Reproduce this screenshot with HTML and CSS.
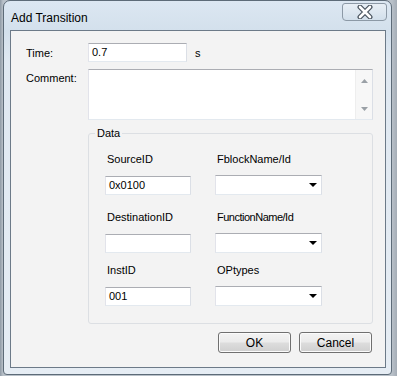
FILE: index.html
```html
<!DOCTYPE html>
<html>
<head>
<meta charset="utf-8">
<link rel="stylesheet" href="styles.css">
</head>
<body>
<div class="window">
  <div class="titlebar">
    <span class="title">Add Transition</span>
    <div class="close">
      <svg width="20" height="14" viewBox="0 0 20 14">
        <path d="M5 2 L15 12 M15 2 L5 12" stroke="#4b5560" stroke-width="5" stroke-linecap="round"/>
        <path d="M5 2 L15 12 M15 2 L5 12" stroke="#ffffff" stroke-width="2.6" stroke-linecap="round"/>
      </svg>
    </div>
  </div>
  <div class="client">
    <div class="row time-row">
      <label class="lbl">Time:</label>
      <div class="textbox time-box">0.7</div>
      <span class="unit">s</span>
    </div>
    <div class="row comment-row">
      <label class="lbl comment-lbl">Comment:</label>
      <div class="textarea">
        <div class="scroll">
          <svg width="7" height="4" viewBox="0 0 7 4"><path d="M0 4 L3.5 0 L7 4 Z" fill="#9aa0a6"/></svg>
          <svg width="7" height="4" viewBox="0 0 7 4"><path d="M0 0 L3.5 4 L7 0 Z" fill="#9aa0a6"/></svg>
        </div>
      </div>
    </div>
    <fieldset class="group">
      <legend>Data</legend>
      <div class="grid">
        <div class="cell r1"><span class="flbl">SourceID</span><div class="textbox small">0x0100</div></div>
        <div class="cell r1"><span class="flbl">FblockName/Id</span><div class="combo"><span class="arrow"></span></div></div>
        <div class="cell r2"><span class="flbl">DestinationID</span><div class="textbox small"></div></div>
        <div class="cell r2"><span class="flbl narrow">FunctionName/Id</span><div class="combo"><span class="arrow"></span></div></div>
        <div class="cell r3"><span class="flbl">InstID</span><div class="textbox small">001</div></div>
        <div class="cell r3"><span class="flbl">OPtypes</span><div class="combo"><span class="arrow"></span></div></div>
      </div>
    </fieldset>
    <div class="buttons">
      <button class="btn">OK</button>
      <button class="btn">Cancel</button>
    </div>
  </div>
</div>
</body>
</html>
```

FILE: styles.css
```css
html, body {
  margin: 0;
  padding: 0;
}
body {
  width: 397px;
  height: 376px;
  overflow: hidden;
  background: linear-gradient(90deg, #8f9aa5 0px, #b9c1c9 3px, #b9c1c9 392px, #a5adb6 397px);
  font-family: "Liberation Sans", Arial, sans-serif;
  font-size: 11px;
  color: #000;
}
.window {
  margin-left: 3px;
  width: 389px;
  height: 375px;
  box-sizing: border-box;
  border: 1px solid #5d6b78;
  border-radius: 7px 7px 4px 4px;
  background: linear-gradient(180deg, #dce7f2 0px, #d3e0ec 30px, #dfe8f1 60px, #e6edf4 375px);
  display: flex;
  flex-direction: column;
}
.titlebar {
  height: 29px;
  display: flex;
  align-items: flex-start;
  justify-content: space-between;
}
.title {
  font-family: "Liberation Sans", Arial, sans-serif;
  font-size: 12px;
  color: #000;
  margin: 10px 0 0 7px;
  line-height: 15px;
}
.close {
  margin: 2px 4px 0 0;
  width: 45px;
  height: 18px;
  box-sizing: border-box;
  border: 1px solid #8c99a6;
  border-radius: 3px 3px 4px 4px;
  background: linear-gradient(180deg, #e8eff6, #d2dfeb);
  display: flex;
  align-items: center;
  justify-content: center;
}
.client {
  margin: 0 5px 0 6px;
  height: 338px;
  box-sizing: border-box;
  border: 1px solid #6c7a88;
  background: #f3f3f3;
  display: flex;
  flex-direction: column;
}
.row {
  display: flex;
}
.lbl {
  width: 62px;
  margin-left: 15px;
  flex: none;
}
.time-row {
  margin-top: 12px;
  align-items: center;
}
.textbox {
  box-sizing: border-box;
  background: #fff;
  border: 1px solid;
  border-color: #abadb3 #dbdfe6 #e3e9ef #e2e3ea;
  line-height: 17px;
  padding-left: 3px;
}
.time-box {
  width: 99px;
  height: 19px;
}
.unit {
  margin-left: 8px;
}
.comment-row {
  margin-top: 7px;
}
.comment-lbl {
  padding-top: 3px;
}
.textarea {
  width: 285px;
  height: 51px;
  box-sizing: border-box;
  background: #fff;
  border: 1px solid;
  border-color: #abadb3 #dbdfe6 #e3e9ef #e2e3ea;
  display: flex;
  justify-content: flex-end;
}
.scroll {
  width: 17px;
  background: #f7f7f7;
  border-left: 1px solid #eeeeee;
  display: flex;
  flex-direction: column;
  align-items: center;
  justify-content: space-between;
  padding: 9px 0 8px;
  box-sizing: border-box;
}
.group {
  margin: 7px 0 0 77px;
  width: 285px;
  height: 197px;
  box-sizing: border-box;
  border: 1px solid #dcdfe3;
  border-radius: 3px;
  padding: 0;
  min-width: 0;
}
.group legend {
  margin-left: 6px;
  padding: 0 2px;
  line-height: 13px;
}
.grid {
  display: grid;
  grid-template-columns: 86px 107px;
  column-gap: 24px;
  margin-left: 16px;
}
.cell {
  display: flex;
  flex-direction: column;
}
.r1 { margin-top: 13px; }
.r2 { margin-top: 16px; }
.r3 { margin-top: 11px; }
.flbl {
  line-height: 13px;
  padding-left: 2px;
  margin-bottom: 10px;
}
.narrow {
  letter-spacing: -0.5px;
}
.small {
  width: 86px;
  height: 19px;
}
.combo {
  width: 107px;
  height: 20px;
  margin-top: -1px;
  box-sizing: border-box;
  background: #fff;
  border: 1px solid;
  border-color: #abadb3 #dbdfe6 #e3e9ef #e2e3ea;
  display: flex;
  align-items: center;
  justify-content: flex-end;
}
.arrow {
  width: 0;
  height: 0;
  border-left: 4px solid transparent;
  border-right: 4px solid transparent;
  border-top: 4px solid #000;
  margin-right: 4px;
}
.buttons {
  display: flex;
  justify-content: flex-end;
  gap: 8px;
  margin: 8px 13px 0 0;
}
.btn {
  width: 73px;
  height: 21px;
  box-sizing: border-box;
  border: 1px solid #707070;
  border-radius: 3px;
  background: linear-gradient(180deg, #f3f3f3 0%, #ebebeb 48%, #dddddd 52%, #cfcfcf 100%);
  box-shadow: inset 0 0 0 1px #fbfbfb;
  font-family: "Liberation Sans", Arial, sans-serif;
  font-size: 12px;
  color: #000;
  padding: 0;
}
```
